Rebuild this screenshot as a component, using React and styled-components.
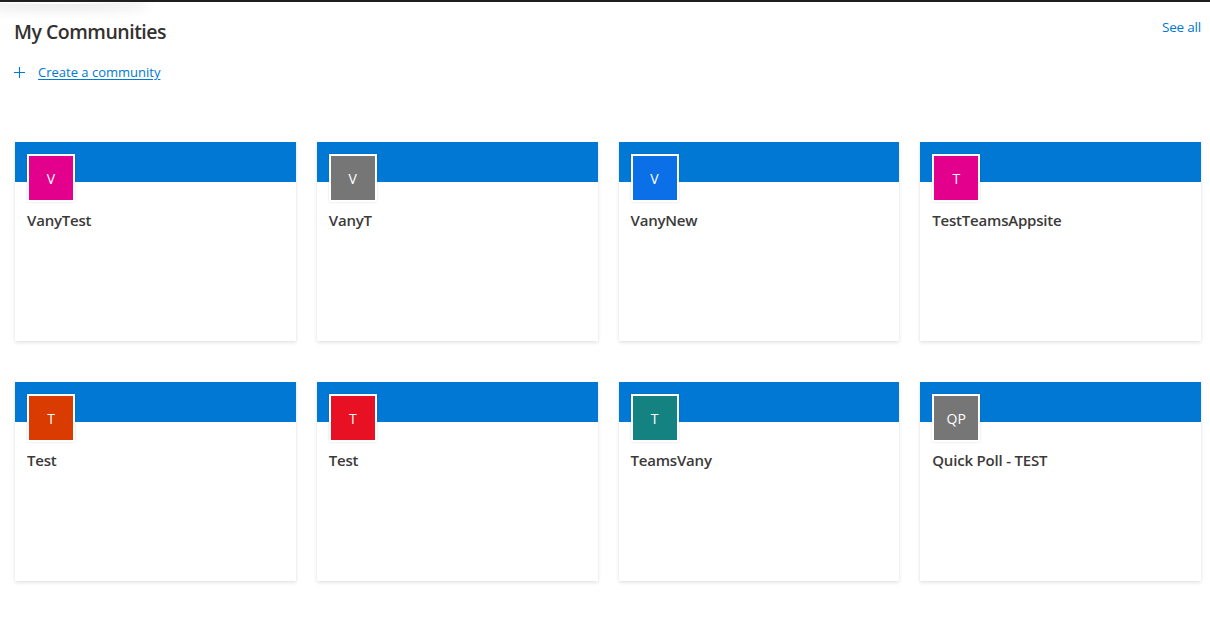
import React from "react";
import styled, { createGlobalStyle } from "styled-components";

const GlobalStyle = createGlobalStyle`
  html, body { margin: 0; padding: 0; background: #ffffff; }
  body { font-family: "Open Sans", "Segoe UI", sans-serif; color: #323130; }
  * { box-sizing: border-box; }
`;

const TopBar = styled.div`
  height: 2px;
  background: #201f1f;
  position: relative;
  &::after {
    content: "";
    position: absolute;
    left: -30px;
    top: -6px;
    width: 180px;
    height: 10px;
    border-radius: 50%;
    box-shadow: 0 6px 12px rgba(0, 0, 0, 0.1);
  }
`;

const Page = styled.main`
  padding: 0 9px 40px 15px;
`;

const Header = styled.header`
  display: flex;
  justify-content: space-between;
  align-items: flex-start;
  padding-top: 16px;
`;

const Title = styled.h2`
  margin: 0 0 0 -1px;
  font-size: 19.5px;
  line-height: 28px;
  font-weight: 600;
  color: #323130;
  letter-spacing: -0.5px;
`;

const SeeAll = styled.a`
  font-size: 13.5px;
  line-height: 20px;
  color: #0078d4;
  text-decoration: none;
  margin-top: -1px;
  letter-spacing: -0.2px;
`;

const CreateRow = styled.div`
  display: flex;
  align-items: center;
  gap: 13px;
  margin: 16px 0 0 -1px;
  height: 20px;
`;

const CreateLink = styled.a`
  font-size: 13px;
  line-height: 20px;
  color: #0078d4;
  text-decoration: underline;
  text-underline-offset: 2px;
`;

const Grid = styled.section`
  display: grid;
  grid-template-columns: repeat(4, 1fr);
  column-gap: 21px;
  row-gap: 41px;
  margin-top: 60px;
`;

const Card = styled.article`
  height: 199px;
  padding: 12px;
  background: linear-gradient(to bottom, #0078d4 40px, #ffffff 40px);
  box-shadow: 0 1.6px 3.6px rgba(0, 0, 0, 0.13), 0 0.3px 0.9px rgba(0, 0, 0, 0.11);
`;

const Avatar = styled.div`
  width: 48px;
  height: 48px;
  border: 2px solid #ffffff;
  background: ${(p) => p.$color};
  color: #ffffff;
  font-size: 14px;
  display: flex;
  align-items: center;
  justify-content: center;
  box-shadow: 0 0 2px rgba(0, 0, 0, 0.15);
`;

const Name = styled.div`
  margin-top: 8px;
  font-size: 15px;
  line-height: 20px;
  font-weight: 600;
  color: #3b3a39;
  letter-spacing: -0.2px;
`;

const communities = [
  { name: "VanyTest", initials: "V", color: "#e3008c" },
  { name: "VanyT", initials: "V", color: "#767676" },
  { name: "VanyNew", initials: "V", color: "#0b6fe8" },
  { name: "TestTeamsAppsite", initials: "T", color: "#e3008c" },
  { name: "Test", initials: "T", color: "#da3b01" },
  { name: "Test", initials: "T", color: "#e81123" },
  { name: "TeamsVany", initials: "T", color: "#158282" },
  { name: "Quick Poll - TEST", initials: "QP", color: "#767676" },
];

export default function App() {
  return (
    <>
      <GlobalStyle />
      <TopBar />
      <Page>
        <Header>
          <Title>My Communities</Title>
          <SeeAll href="#">See all</SeeAll>
        </Header>
        <CreateRow>
          <svg width="11" height="11" viewBox="0 0 11 11" aria-hidden="true">
            <path d="M5.5 0v11M0 5.5h11" stroke="#0078d4" strokeWidth="1.1" fill="none" />
          </svg>
          <CreateLink href="#">Create a community</CreateLink>
        </CreateRow>
        <Grid>
          {communities.map((c, i) => (
            <Card key={i}>
              <Avatar $color={c.color}>{c.initials}</Avatar>
              <Name>{c.name}</Name>
            </Card>
          ))}
        </Grid>
      </Page>
    </>
  );
}
